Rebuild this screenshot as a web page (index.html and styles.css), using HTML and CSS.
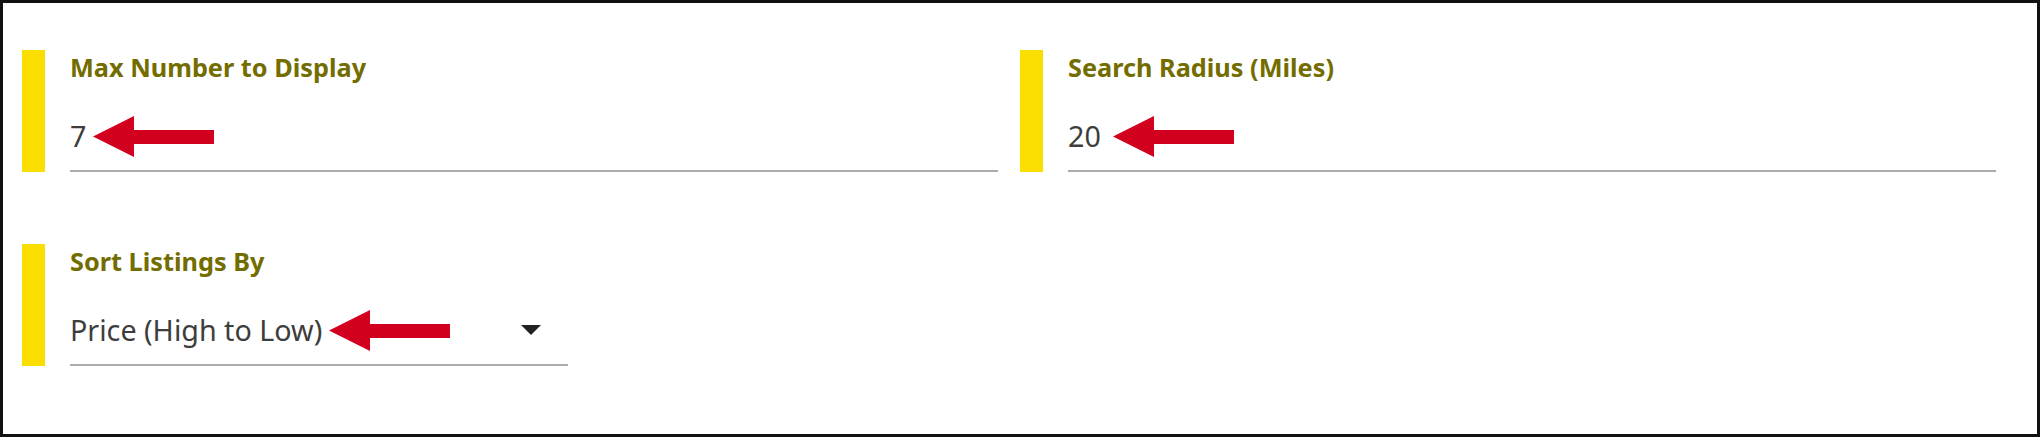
FILE: index.html
```html
<!DOCTYPE html>
<html lang="en">
<head>
<meta charset="utf-8">
<title>Listing settings</title>
<link rel="stylesheet" href="styles.css">
</head>
<body>
<div class="panel">
  <div class="field">
    <div class="bar"></div>
    <div class="content">
      <div class="label">Max Number to Display</div>
      <div class="value-row">
        <span class="value">7</span>
        <svg class="arrow" viewBox="0 0 121 41" width="121" height="41"><polygon points="0,20.5 41,0 41,14 121,14 121,28 41,28 41,41"/></svg>
      </div>
    </div>
  </div>
  <div class="field">
    <div class="bar"></div>
    <div class="content">
      <div class="label">Search Radius (Miles)</div>
      <div class="value-row">
        <span class="value">20</span>
        <svg class="arrow arrow-wide" viewBox="0 0 121 41" width="121" height="41"><polygon points="0,20.5 41,0 41,14 121,14 121,28 41,28 41,41"/></svg>
      </div>
    </div>
  </div>
  <div class="field">
    <div class="bar"></div>
    <div class="content content-select">
      <div class="label">Sort Listings By</div>
      <div class="value-row">
        <span class="value">Price (High to Low)</span>
        <svg class="arrow" viewBox="0 0 121 41" width="121" height="41"><polygon points="0,20.5 41,0 41,14 121,14 121,28 41,28 41,41"/></svg>
        <span class="caret"></span>
      </div>
    </div>
  </div>
</div>
</body>
</html>
```
FILE: styles.css
```css
html, body {
  margin: 0;
  padding: 0;
  background: #fff;
}

.panel {
  box-sizing: border-box;
  width: 2040px;
  height: 437px;
  border: 3px solid #111;
  padding: 47px 41px 0 19px;
  display: grid;
  grid-template-columns: 1fr 1fr;
  column-gap: 22px;
  row-gap: 72px;
  align-content: start;
  font-family: "Noto Sans", "Open Sans", sans-serif;
}

.field {
  display: flex;
  align-items: stretch;
}

.bar {
  width: 23px;
  flex: none;
  background: #fade00;
}

.content {
  flex: 1;
  margin-left: 25px;
  display: flex;
  flex-direction: column;
}

.content-select {
  flex: none;
  width: 498px;
}

.label {
  font-size: 25.3px;
  font-weight: 700;
  color: #736d00;
  line-height: 34px;
}

.value-row {
  margin-top: 32px;
  height: 40px;
  padding-bottom: 14px;
  border-bottom: 2px solid #ababb0;
  display: flex;
  align-items: center;
}

.value {
  font-size: 28.7px;
  color: #3d3d3d;
  line-height: 40px;
}

.arrow {
  flex: none;
  margin-left: 7px;
  fill: #d0001e;
}

.arrow-wide {
  margin-left: 12px;
}

.caret {
  margin-left: auto;
  margin-right: 27px;
  width: 0;
  height: 0;
  border-left: 10.5px solid transparent;
  border-right: 10.5px solid transparent;
  border-top: 10px solid #222;
}
```
